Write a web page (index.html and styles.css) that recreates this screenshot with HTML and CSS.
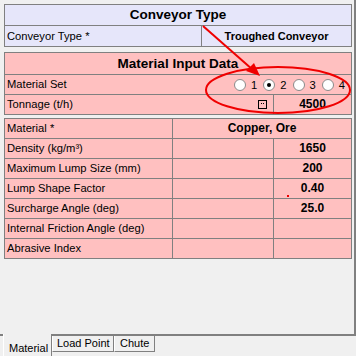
FILE: index.html
```html
<!DOCTYPE html>
<html>
<head>
<meta charset="utf-8">
<link rel="stylesheet" href="styles.css">
</head>
<body>
<div class="panel">
  <div class="tbl lav t1">
    <div class="hdr h1">Conveyor Type</div>
    <div class="row cols-t1">
      <div class="c lbl">Conveyor Type *</div>
      <div class="c val">Troughed Conveyor</div>
    </div>
  </div>

  <div class="tbl pink t2">
    <div class="hdr h2">Material Input Data</div>
    <div class="row cols-one">
      <div class="c lbl split">
        <span>Material Set</span>
        <span class="radios">
          <span class="rb"><span class="circle"></span>1</span>
          <span class="rb"><span class="circle on"></span>2</span>
          <span class="rb"><span class="circle"></span>3</span>
          <span class="rb"><span class="circle"></span>4</span>
        </span>
      </div>
    </div>
    <div class="row cols-ton">
      <div class="c lbl split">
        <span>Tonnage (t/h)</span>
        <svg class="ell" width="9" height="9" viewBox="0 0 9 9"><rect x="0.5" y="0.5" width="8" height="8" fill="none" stroke="#000"/><rect x="3" y="3" width="1" height="1" fill="#000"/><rect x="5" y="3" width="1" height="1" fill="#000"/></svg>
      </div>
      <div class="c val">4500</div>
    </div>
  </div>

  <div class="tbl pink t3">
    <div class="row cols-mat">
      <div class="c lbl">Material *</div>
      <div class="c val">Copper, Ore</div>
    </div>
    <div class="row cols-3">
      <div class="c lbl">Density (kg/m³)</div><div class="c"></div><div class="c val">1650</div>
    </div>
    <div class="row cols-3">
      <div class="c lbl">Maximum Lump Size (mm)</div><div class="c"></div><div class="c val">200</div>
    </div>
    <div class="row cols-3">
      <div class="c lbl">Lump Shape Factor</div><div class="c"></div><div class="c val">0.40</div>
    </div>
    <div class="row cols-3">
      <div class="c lbl">Surcharge Angle (deg)</div><div class="c"></div><div class="c val">25.0</div>
    </div>
    <div class="row cols-3">
      <div class="c lbl">Internal Friction Angle (deg)</div><div class="c"></div><div class="c val"></div>
    </div>
    <div class="row cols-3">
      <div class="c lbl">Abrasive Index</div><div class="c"></div><div class="c val"></div>
    </div>
  </div>
</div>

<div class="tabs">
  <div class="tab active">Material</div>
  <div class="tab mid">Load Point</div>
  <div class="tab last">Chute</div>
</div>

<svg class="anno" width="356" height="356" viewBox="0 0 356 356">
  <ellipse cx="278" cy="90" rx="72" ry="23" fill="none" stroke="#f00000" stroke-width="2"/>
  <line x1="203" y1="26" x2="253" y2="70" stroke="#f00000" stroke-width="2"/>
  <polygon points="260,76 246,71 254,63" fill="#f00000"/>
  <rect x="287" y="195" width="2" height="2" fill="#f00000"/>
</svg>
</body>
</html>
```

FILE: styles.css
```css
html, body {
  margin: 0;
  padding: 0;
  background: #f0f0f0;
  font-family: "Liberation Sans", Arial, sans-serif;
  font-size: 11px;
  color: #000;
}

body {
  position: relative;
  width: 356px;
  height: 356px;
  overflow: hidden;
}

.panel {
  width: 356px;
  height: 336px;
  box-sizing: border-box;
  padding: 4px 0 0 4px;
  border-right: 2px solid #808080;
  border-bottom: 2px solid #808080;
}

.tbl {
  width: 348px;
  box-sizing: border-box;
  border-top: 1px solid #808080;
  border-left: 1px solid #808080;
}

.lav { background: #e6e6fa; }
.pink { background: #ffc0c0; }

.t1 { margin-bottom: 5px; }
.t2 { margin-bottom: 3px; }

.hdr {
  border-right: 1px solid #808080;
  border-bottom: 1px solid #808080;
  text-align: center;
  font-weight: bold;
  font-size: 13.5px;
}
.h1 { height: 20px; line-height: 20px; }
.h2 { height: 21px; line-height: 21px; }

.row { display: grid; }
.cols-t1 { grid-template-columns: 197px 150px; }
.cols-one { grid-template-columns: 347px; }
.cols-ton { grid-template-columns: 269px 78px; }
.cols-mat { grid-template-columns: 168px 179px; }
.cols-3 { grid-template-columns: 168px 101px 78px; }

.c {
  box-sizing: border-box;
  height: 20px;
  line-height: 19px;
  border-right: 1px solid #808080;
  border-bottom: 1px solid #808080;
  white-space: nowrap;
  overflow: hidden;
}
.cols-t1 .c { height: 21px; line-height: 20px; }

.lbl { padding-left: 2px; font-size: 11.2px; }
.val {
  text-align: center;
  font-weight: bold;
}
.cols-mat .val, .cols-3 .val, .cols-ton .val { font-size: 12px; }

.split {
  display: flex;
  align-items: center;
  justify-content: space-between;
}

.radios {
  display: flex;
  align-items: center;
  padding-right: 6px;
}
.rb {
  display: flex;
  align-items: center;
  margin-left: 6px;
  line-height: 12px;
}
.circle {
  position: relative;
  width: 12px;
  height: 12px;
  box-sizing: border-box;
  border-radius: 50%;
  background: #fff;
  border: 1px solid #8a8a8a;
  margin-right: 5px;
}
.circle.on::after {
  content: "";
  position: absolute;
  left: 3px;
  top: 3px;
  width: 4px;
  height: 4px;
  border-radius: 50%;
  background: #000;
}

.ell { margin-right: 6px; }

.tabs {
  display: flex;
  align-items: flex-start;
  padding-left: 3px;
  margin-top: -2px;
}
.tab {
  box-sizing: border-box;
  margin-top: 2px;
  height: 16px;
  line-height: 14px;
  padding: 0 0 0 4px;
  border-left: 1px solid #ffffff;
  border-right: 1px solid #808080;
  border-bottom: 1px solid #808080;
  background: #f0f0f0;
  font-size: 11px;
  white-space: nowrap;
}
.tab.active {
  margin-top: 0;
  height: 22px;
  line-height: 14px;
  padding: 7px 0 0 5px;
  width: 49px;
  border-bottom: none;
}
.tab.mid { width: 62px; }
.tab.last { width: 41px; padding-left: 5px; }

.anno {
  position: absolute;
  left: 0;
  top: 0;
  pointer-events: none;
}
```
